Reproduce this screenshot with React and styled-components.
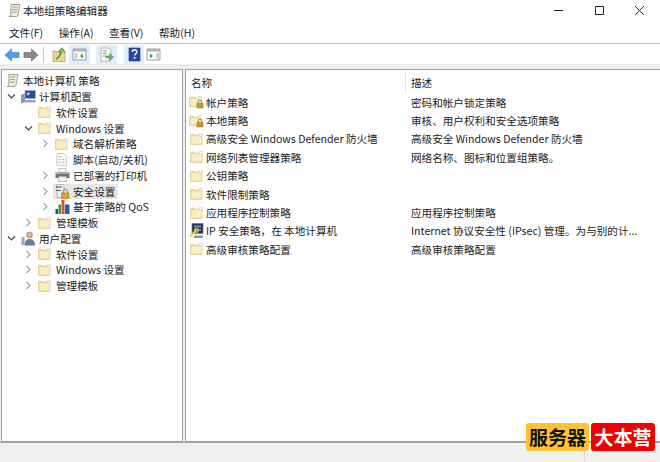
import React from 'react';
import styled, { createGlobalStyle } from 'styled-components';

const Global = createGlobalStyle`
  html, body { margin: 0; padding: 0; background: #fff; }
  body {
    font-family: "Noto Sans CJK SC", "Noto Sans", sans-serif;
    font-size: 10.6px;
    color: #222;
  }
`;

const Win = styled.div`
  position: relative;
  width: 660px;
  height: 462px;
  display: flex;
  flex-direction: column;
  overflow: hidden;
`;

const TitleBar = styled.div`
  height: 23px;
  display: flex;
  align-items: flex-start;
  padding-left: 7px;
`;

const TitleIcon = styled.div`
  width: 15px;
  height: 21px;
  margin-right: 1px;
  display: flex;
  align-items: center;
`;

const TitleText = styled.div`
  flex: 1;
  line-height: 22px;
`;

const Caption = styled.div`
  width: 40.5px;
  height: 21px;
  display: flex;
  align-items: center;
  justify-content: center;
`;

const MenuBar = styled.div`
  height: 21px;
  display: flex;
  align-items: center;
  padding-left: 9px;
  gap: 15.5px;
  border-bottom: 1px solid #c4c4c4;
  box-sizing: border-box;
`;

const MenuItem = styled.div`
  line-height: 22px;
`;

const ToolBar = styled.div`
  height: 20px;
  display: flex;
  align-items: center;
  padding-left: 2px;
  padding-top: 1px;
  box-sizing: border-box;
`;

const ToolBtn = styled.div`
  width: ${p => p.$w || 19}px;
  height: 19px;
  margin-right: ${p => p.$mr || 0}px;
  display: flex;
  align-items: center;
  justify-content: center;
  background: ${p => (p.$on ? '#e3eefa' : 'transparent')};
`;

const Sep = styled.div`
  width: 1px;
  height: 16px;
  margin: 0 5px 0 3px;
  background: #c9c9c9;
`;

const Work = styled.div`
  flex: 1;
  min-height: 0;
  display: flex;
  gap: 2px;
  background: #efefef;
  padding-top: 5px;
`;

const TreePane = styled.div`
  width: 182px;
  background: #fff;
  border: 1px solid #a0a0a8;
  padding-top: 3px;
  box-sizing: border-box;
  height: 100%;
  flex-shrink: 0;
  margin-left: 1px;
`;

const TreeRow = styled.div`
  height: 15.75px;
  display: flex;
  align-items: center;
  padding-left: ${p => p.$level * 17 + (p.$flush ? 2 : 3)}px;
  white-space: nowrap;
`;

const Arrow = styled.div`
  width: 15px;
  height: 15px;
  flex-shrink: 0;
  padding-left: 1.5px;
  box-sizing: border-box;
  display: flex;
  align-items: center;
`;

const TreeItem = styled.div`
  display: flex;
  align-items: center;
  height: 15px;
  padding: 0 3px 0 ${p => (p.$sel ? 1 : 0)}px;
  margin-left: ${p => (p.$sel ? -1 : 0)}px;
  background: ${p => (p.$sel ? '#e6e6e6' : 'transparent')};
`;

const TreeIcon = styled.div`
  width: 17px;
  height: 15px;
  flex-shrink: 0;
  margin-right: 2px;
  padding-left: 1px;
  box-sizing: border-box;
  display: flex;
  align-items: center;
`;

const TreeLabel = styled.span`
  line-height: 15px;
`;

const ListPane = styled.div`
  flex: 1;
  min-width: 0;
  background: #fff;
  border: 1px solid #a0a0a8;
  border-right: 0;
  box-sizing: border-box;
`;

const HeaderRow = styled.div`
  height: 23px;
  display: grid;
  grid-template-columns: 220px 1fr;
  align-items: center;
`;

const HeaderCell = styled.div`
  padding-left: 5px;
  height: 23px;
  line-height: 26px;
  border-right: ${p => (p.$line ? '1px solid #e5e5e5' : '0')};
`;

const ListRow = styled.div`
  height: 18.4px;
  display: grid;
  grid-template-columns: 222px 1fr;
  align-items: center;
  white-space: nowrap;
`;

const NameCell = styled.div`
  display: flex;
  align-items: center;
  padding-left: 3px;
`;

const ListIcon = styled.div`
  width: 15px;
  height: 15px;
  flex-shrink: 0;
  margin-right: 2px;
  display: flex;
  align-items: center;
  justify-content: center;
`;

const DescCell = styled.div`
  padding-left: 3px;
`;

const StatusBar = styled.div`
  height: 20px;
  flex-shrink: 0;
  background: #f0f0f0;
  border-top: 1px solid #a0a0a8;
  box-sizing: border-box;
  display: flex;
  justify-content: flex-end;
`;

const StatusCell = styled.div`
  width: 75px;
  border-left: 1px solid #dcdcdc;
`;

const Badge = styled.div`
  position: absolute;
  right: 5px;
  bottom: 11px;
  display: flex;
  gap: 2px;
`;

const BadgeText = styled.div`
  width: ${p => p.$w}px;
  height: 28px;
  border-radius: 3px;
  background: ${p => p.$bg};
  color: ${p => p.$fg};
  font-size: 19px;
  font-weight: 700;
  line-height: 28px;
  text-align: center;
  white-space: nowrap;
`;

const Folder = () => (
  <svg width="13" height="12" viewBox="0 0 14 13">
    <path d="M.5 1.500H5l1 1h4V.5h3v12H.5z" fill="#eed68e" stroke="#dcc68a" strokeWidth="0.7" />
    <path d="M1.500 3.500h11v8h-11z" fill="#fbeec2" />
    <path d="M10 .5h3v2.500h-3z" fill="#f7f7f4" stroke="#d8d8d0" strokeWidth="0.5" />
  </svg>
);

const LockFolder = () => (
  <svg width="15" height="14" viewBox="0 0 16 15">
    <path d="M.5 2.500H5l1 1h4v-2h3v11H.5z" fill="#eed68e" stroke="#dcc68a" strokeWidth="0.7" />
    <path d="M1.500 4.500h11v7h-11z" fill="#fbeec2" />
    <path d="M10 1.500h3V4h-3z" fill="#f7f7f4" stroke="#d8d8d0" strokeWidth="0.5" />
    <path d="M9.800 9V7.500a2 2 0 0 1 4 0V9" fill="none" stroke="#8a7b55" strokeWidth="1" />
    <path d="M8.500 9H15v5H8.500z" fill="#c99a2e" stroke="#8a6a20" strokeWidth="0.5" />
  </svg>
);

const Doc = () => (
  <svg width="13" height="13" viewBox="0 0 14 14">
    <path d="M2 .5h7.500L12.500 3.500v10H2z" fill="#fbfbfb" stroke="#b4bac2" strokeWidth="0.8" />
    <path d="M4 4h3M8 7h2M4 7h2M4 10h2M8 10h2" stroke="#a0a6ad" strokeWidth="0.9" />
  </svg>
);

const Scroll = () => (
  <svg width="15" height="15" viewBox="0 0 15 15">
    <path d="M4 1.500h9l-2 10.500c-.3 1.200-1 1.500-2 1.500H2c1 0 1.500-.5 1.700-1.500z" fill="#f0ecdc" stroke="#8f8b78" strokeWidth="0.8" />
    <path d="M5.500 4h5M5 6.500h5M4.800 9h5" stroke="#8f8b78" strokeWidth="0.8" />
  </svg>
);

const Computer = () => (
  <svg width="15" height="14" viewBox="0 0 15 14">
    <path d="M.5 5l3-1v8l-3 1z" fill="#8f9bac" stroke="#5c6a80" strokeWidth="0.5" />
    <path d="M4 .5h10.500v8H4z" fill="#1e4fa8" stroke="#a3aebd" strokeWidth="0.8" />
    <path d="M6 2.500l3.500.5-3 3z" fill="#cfe2ff" />
    <path d="M4 10h10.500v2.500H4z" fill="#9aa5b4" />
  </svg>
);

const Printer = () => (
  <svg width="15" height="14" viewBox="0 0 15 14">
    <path d="M4 .5h7v4H4z" fill="#fff" stroke="#a9a9a9" strokeWidth="0.7" />
    <path d="M.5 4.500h14v5.500H.5z" fill="#6e7278" />
    <path d="M.5 5.500h14" stroke="#a9adb3" />
    <path d="M3.500 8.500h8v5h-8z" fill="#f4f4f4" stroke="#9a9a9a" strokeWidth="0.6" />
  </svg>
);

const Security = () => (
  <svg width="15" height="15" viewBox="0 0 15 15">
    <path d="M2 .5h7v13H2z" fill="#f1f3f6" stroke="#9aa3ae" strokeWidth="0.7" />
    <path d="M1 3h6M1 6.500h5" stroke="#4a5560" strokeWidth="1.100" />
    <path d="M8 9V7.500a2.200 2.200 0 0 1 4.400 0V9" fill="none" stroke="#8a7b55" strokeWidth="1" />
    <path d="M6.500 9h7.500v5.500H6.500z" fill="#d9a92f" stroke="#96721c" strokeWidth="0.5" />
  </svg>
);

const Chart = () => (
  <svg width="15" height="15" viewBox="0 0 15 15">
    <path d="M.5 10H3v5H.5z" fill="#1f4f8f" />
    <path d="M3.500 5.500H6V15H3.500z" fill="#2f9e44" />
    <path d="M6.500 1H9.500v14h-3z" fill="#e0541f" />
    <path d="M10 5.500h4.500V15H10z" fill="#1f5fb4" />
  </svg>
);

const User = () => (
  <svg width="15" height="15" viewBox="0 0 15 15">
    <circle cx="8.500" cy="4" r="3" fill="#d8b08c" stroke="#8a6a50" strokeWidth="0.5" />
    <path d="M3.500 14.500c0-4.500 2-6.500 5-6.500s5.500 2 5.500 6.500z" fill="#5d7fa8" />
    <path d="M.5 6.500l3-1v8l-3 1z" fill="#9fa9b6" />
  </svg>
);

const Ipsec = () => (
  <svg width="15" height="16" viewBox="0 0 15 16">
    <path d="M3 .5h11v10H3z" fill="#26344f" stroke="#65718a" strokeWidth="0.7" />
    <path d="M5 2.500h7v2H5zM5 6h7v2H5z" fill="#6d8fc9" />
    <path d="M1 13.500l6-6" stroke="#e8cf3a" strokeWidth="2.200" />
    <circle cx="7.500" cy="7.500" r="1.800" fill="none" stroke="#e8cf3a" strokeWidth="1.200" />
    <path d="M5 12.500h9v2.500H5z" fill="#8d97a8" />
  </svg>
);

const Down = () => (
  <svg width="9" height="9" viewBox="0 0 9 9">
    <path d="M1 2.500l3.500 3.500L8 2.500" fill="none" stroke="#444" strokeWidth="1.200" />
  </svg>
);

const Right = () => (
  <svg width="9" height="9" viewBox="0 0 9 9">
    <path d="M2.500 1l3.500 3.500L2.500 8" fill="none" stroke="#a6a6a6" strokeWidth="1.200" />
  </svg>
);

const treeRows = [
  { level: 0, icon: <Scroll />, text: '本地计算机 策略', flush: true },
  { level: 0, arrow: 'down', icon: <Computer />, text: '计算机配置' },
  { level: 1, icon: <Folder />, text: '软件设置' },
  { level: 1, arrow: 'down', icon: <Folder />, text: 'Windows 设置' },
  { level: 2, arrow: 'right', icon: <Folder />, text: '域名解析策略' },
  { level: 2, icon: <Doc />, text: '脚本(启动/关机)' },
  { level: 2, arrow: 'right', icon: <Printer />, text: '已部署的打印机' },
  { level: 2, arrow: 'right', icon: <Security />, text: '安全设置', sel: true },
  { level: 2, arrow: 'right', icon: <Chart />, text: '基于策略的 QoS' },
  { level: 1, arrow: 'right', icon: <Folder />, text: '管理模板' },
  { level: 0, arrow: 'down', icon: <User />, text: '用户配置' },
  { level: 1, arrow: 'right', icon: <Folder />, text: '软件设置' },
  { level: 1, arrow: 'right', icon: <Folder />, text: 'Windows 设置' },
  { level: 1, arrow: 'right', icon: <Folder />, text: '管理模板' },
];

const listRows = [
  { icon: <LockFolder />, name: '帐户策略', desc: '密码和帐户锁定策略' },
  { icon: <LockFolder />, name: '本地策略', desc: '审核、用户权利和安全选项策略' },
  { icon: <Folder />, name: '高级安全 Windows Defender 防火墙', desc: '高级安全 Windows Defender 防火墙' },
  { icon: <Folder />, name: '网络列表管理器策略', desc: '网络名称、图标和位置组策略。' },
  { icon: <Folder />, name: '公钥策略', desc: '' },
  { icon: <Folder />, name: '软件限制策略', desc: '' },
  { icon: <Folder />, name: '应用程序控制策略', desc: '应用程序控制策略' },
  { icon: <Ipsec />, name: 'IP 安全策略，在 本地计算机', desc: 'Internet 协议安全性 (IPsec) 管理。为与别的计...' },
  { icon: <Folder />, name: '高级审核策略配置', desc: '高级审核策略配置' },
];

export default function App() {
  return (
    <Win>
      <Global />
      <TitleBar>
        <TitleIcon><Scroll /></TitleIcon>
        <TitleText>本地组策略编辑器</TitleText>
        <Caption>
          <svg width="11" height="11" viewBox="0 0 11 11"><path d="M1 5.500h9" stroke="#222" /></svg>
        </Caption>
        <Caption>
          <svg width="11" height="11" viewBox="0 0 11 11"><path d="M1.500 1.500h8v8h-8z" fill="none" stroke="#222" /></svg>
        </Caption>
        <Caption>
          <svg width="11" height="11" viewBox="0 0 11 11"><path d="M1 1l9 9M10 1l-9 9" stroke="#333" /></svg>
        </Caption>
      </TitleBar>
      <MenuBar>
        <MenuItem>文件(F)</MenuItem>
        <MenuItem>操作(A)</MenuItem>
        <MenuItem>查看(V)</MenuItem>
        <MenuItem>帮助(H)</MenuItem>
      </MenuBar>
      <ToolBar>
        <ToolBtn>
          <svg width="16" height="14" viewBox="0 0 16 14"><path d="M1 7l6.500-6v3.500H15v5H7.500V13z" fill="#4ea2e6" stroke="#3a8ad0" strokeWidth="0.7" /></svg>
        </ToolBtn>
        <ToolBtn>
          <svg width="16" height="14" viewBox="0 0 16 14"><path d="M15 7L8.500 1v3.500H1v5h7.500V13z" fill="#8a8a8a" stroke="#747474" strokeWidth="0.7" /></svg>
        </ToolBtn>
        <Sep />
        <ToolBtn $mr={1}>
          <svg width="14" height="15" viewBox="0 0 14 15">
            <path d="M1 4h3l1 1h8v9.500H1z" fill="#eed58e" stroke="#b0954a" strokeWidth="0.7" />
            <path d="M4 12c2-1 4.500-3 5.500-8M6.500 5.500L10 1.500l3 4" fill="none" stroke="#4aa63a" strokeWidth="1.600" />
          </svg>
        </ToolBtn>
        <ToolBtn $on $w={21} $mr={6}>
          <svg width="15" height="13" viewBox="0 0 15 13">
            <path d="M1 1h13v11H1z" fill="#fff" stroke="#7d8791" strokeWidth="0.8" />
            <path d="M1 1h13v2.500H1z" fill="#a7b2bd" />
            <path d="M2.500 5h3v5.500h-3z" fill="#c4ccd4" />
            <path d="M11 5.500L8 8l3 2.500z" fill="#3d9a4b" />
          </svg>
        </ToolBtn>
        <ToolBtn $on $w={21} $mr={7}>
          <svg width="15" height="15" viewBox="0 0 15 15">
            <path d="M2 1h8l2 2v11H2z" fill="#fbfbfb" stroke="#9aa0a6" strokeWidth="0.7" />
            <path d="M4 4h4M4 6.500h3M4 9h3" stroke="#8e8e8e" />
            <path d="M7 9h3.500V6.500l4 3.500-4 3.500V11H7z" fill="#66b84a" stroke="#3f8c30" strokeWidth="0.5" />
          </svg>
        </ToolBtn>
        <ToolBtn $on $w={20}>
          <svg width="13" height="15" viewBox="0 0 13 15">
            <path d="M1 1h11v13H1z" fill="#2648a8" stroke="#1a2f78" strokeWidth="0.6" />
            <path d="M4.300 5c0-3 4.500-3 4.500 0 0 1.700-2.200 1.700-2.200 3.500" fill="none" stroke="#fff" strokeWidth="1.400" />
            <path d="M5.800 10h1.600v1.700H5.800z" fill="#fff" />
          </svg>
        </ToolBtn>
        <ToolBtn>
          <svg width="15" height="13" viewBox="0 0 15 13">
            <path d="M1 1h13v11H1z" fill="#fff" stroke="#7d8791" strokeWidth="0.8" />
            <path d="M1 1h13v2.500H1z" fill="#a7b2bd" />
            <path d="M10 5h3v5.500h-3z" fill="#c4ccd4" />
            <path d="M4 5.500L7 8l-3 2.500z" fill="#3d9a4b" />
          </svg>
        </ToolBtn>
      </ToolBar>
      <Work>
        <TreePane>
          {treeRows.map((row, i) => (
            <TreeRow key={i} $level={row.level} $flush={row.flush}>
              {!row.flush && (
                <Arrow>
                  {row.arrow === 'down' && <Down />}
                  {row.arrow === 'right' && <Right />}
                </Arrow>
              )}
              <TreeItem $sel={row.sel}>
                <TreeIcon>{row.icon}</TreeIcon>
                <TreeLabel>{row.text}</TreeLabel>
              </TreeItem>
            </TreeRow>
          ))}
        </TreePane>
        <ListPane>
          <HeaderRow>
            <HeaderCell $line>名称</HeaderCell>
            <HeaderCell>描述</HeaderCell>
          </HeaderRow>
          {listRows.map((row, i) => (
            <ListRow key={i}>
              <NameCell>
                <ListIcon>{row.icon}</ListIcon>
                <span>{row.name}</span>
              </NameCell>
              <DescCell>{row.desc}</DescCell>
            </ListRow>
          ))}
        </ListPane>
      </Work>
      <StatusBar>
        <StatusCell />
      </StatusBar>
      <Badge>
        <BadgeText $w={63} $bg="#ffc233" $fg="#111">服务器</BadgeText>
        <BadgeText $w={64} $bg="#f00000" $fg="#fff">大本营</BadgeText>
      </Badge>
    </Win>
  );
}
